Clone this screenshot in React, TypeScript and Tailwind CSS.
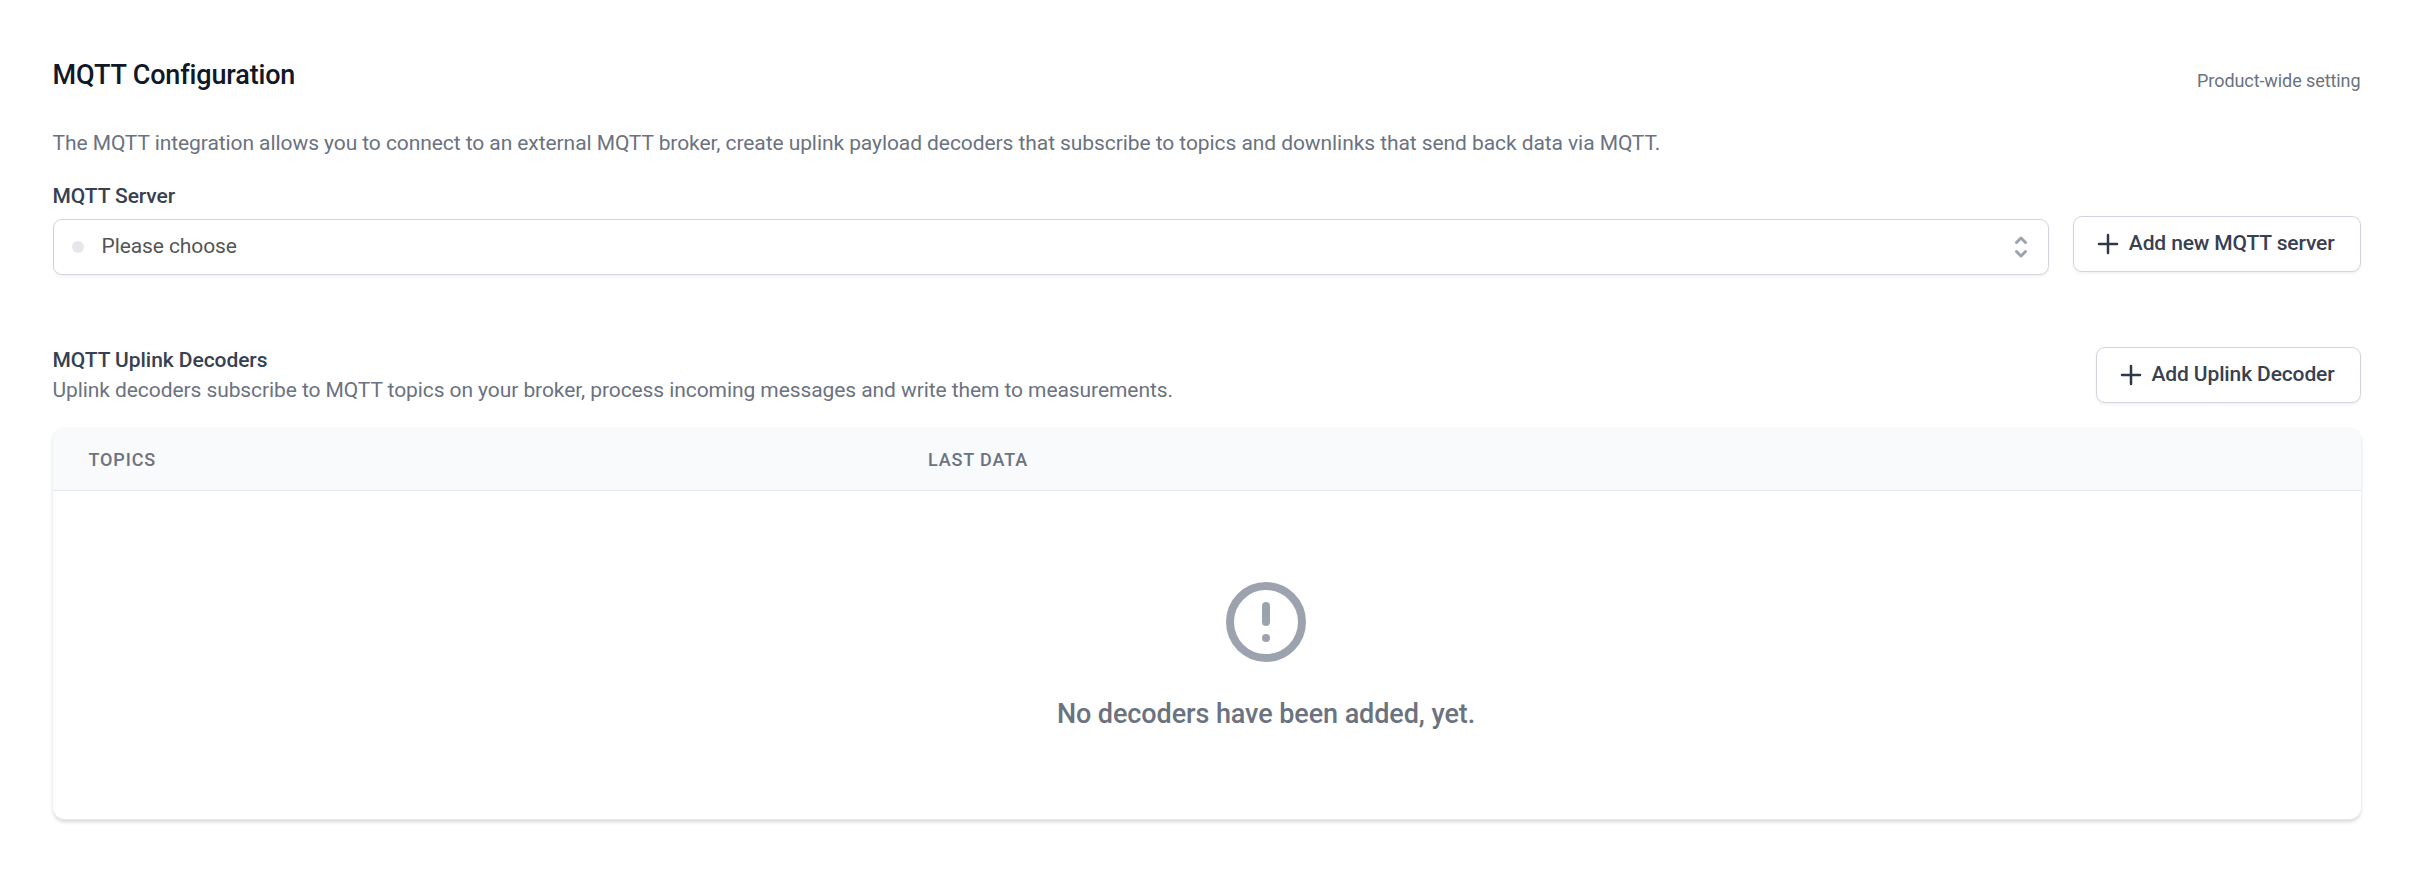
import React from "react";

function PlusIcon() {
  return (
    <svg className="-ml-1.5 mr-1.5 size-[30px] text-[#2d3949]" viewBox="0 0 24 24" fill="none" stroke="currentColor" strokeWidth="2">
      <path strokeLinecap="round" strokeLinejoin="round" d="M12 4.8v14.4m7.2-7.2H4.8" />
    </svg>
  );
}

function Button({ children }: { children: React.ReactNode }) {
  return (
    <button className="flex h-14 shrink-0 items-center rounded-[9px] border border-[#d1d5db] bg-white px-[25px] text-[21px] leading-[30px] font-medium tracking-[-0.13px] text-[#374151] shadow-[0_1.5px_3px_rgba(0,0,0,0.05)]">
      <PlusIcon />
      <span className="-mt-[3px]">{children}</span>
    </button>
  );
}

function ServerSelect() {
  return (
    <div className="flex h-14 items-center rounded-[9px] border border-[#d1d5db] bg-white pr-3 pl-[18px] shadow-[0_1.5px_3px_rgba(0,0,0,0.05)]">
      <span className="size-3 rounded-full bg-[#e5e7eb]" />
      <span className="-mt-[3px] ml-[18px] flex-1 text-[21px] leading-[30px] tracking-[-0.1px] text-[#555555]">Please choose</span>
      <svg className="size-[30px] text-[#9ca3af]" viewBox="0 0 20 20" fill="currentColor">
        <path
          fillRule="evenodd"
          clipRule="evenodd"
          d="M10 3a1 1 0 01.707.293l3 3a1 1 0 01-1.414 1.414L10 5.414 7.707 7.707a1 1 0 01-1.414-1.414l3-3A1 1 0 0110 3zm-3.707 9.293a1 1 0 011.414 0L10 14.586l2.293-2.293a1 1 0 011.414 1.414l-3 3a1 1 0 01-1.414 0l-3-3a1 1 0 010-1.414z"
        />
      </svg>
    </div>
  );
}

function DecoderTable() {
  return (
    <div className="mt-6 h-[391px] overflow-hidden rounded-xl border-b border-[#e5e7eb] bg-white shadow-[0_1.5px_4.5px_rgba(0,0,0,0.1),0_1.5px_3px_rgba(0,0,0,0.06)]">
      <div className="flex h-[62px] border-b border-[#e5e7eb] bg-[#f9fafb] pt-[19px] text-[18px] leading-6 font-medium tracking-[0.86px] text-[#6b7280] uppercase">
        <div className="w-[839.5px] pl-9">Topics</div>
        <div className="pl-9">Last data</div>
      </div>
      <div className="flex flex-col items-center pt-[83px] pl-[119px]">
        <svg className="size-24 text-[#9ca3af]" viewBox="0 0 24 24" fill="none" stroke="currentColor" strokeWidth="2">
          <path strokeLinecap="round" strokeLinejoin="round" d="M12 8v4m0 4h.01M21 12a9 9 0 11-18 0 9 9 0 0118 0z" />
        </svg>
        <p className="mt-[26px] text-[27px] leading-9 font-medium tracking-[-0.09px] text-[#6b7280]">No decoders have been added, yet.</p>
      </div>
    </div>
  );
}

export default function App() {
  return (
    <main className="h-[878px] bg-white pt-[57px] pr-[68.5px] pl-[52.5px] font-['Roboto',sans-serif]">
      <header className="flex items-end justify-between">
        <h1 className="text-[27px] leading-9 font-medium tracking-[-0.15px] text-[#111827]">MQTT Configuration</h1>
        <span className="text-[18px] leading-6 tracking-[-0.08px] text-[#6b7280]">Product-wide setting</span>
      </header>
      <p className="mt-[35px] text-[21px] leading-[30px] tracking-[-0.075px] text-[#6b7280]">
        The MQTT integration allows you to connect to an external MQTT broker, create uplink payload decoders that
        subscribe to topics and downlinks that send back data via MQTT.
      </p>
      <section className="mt-[23px] flex items-end gap-6">
        <div className="flex-1">
          <label className="block text-[21px] leading-[30px] font-medium tracking-[-0.08px] text-[#374151]">MQTT Server</label>
          <div className="mt-2">
            <ServerSelect />
          </div>
        </div>
        <div className="pb-[3px]">
          <Button>Add new MQTT server</Button>
        </div>
      </section>
      <section className="mt-[70px]">
        <div className="flex items-start justify-between">
          <div className="text-[21px] leading-[30px]">
            <h2 className="font-medium tracking-[-0.06px] text-[#374151]">MQTT Uplink Decoders</h2>
            <p className="tracking-[-0.08px] text-[#6b7280]">
              Uplink decoders subscribe to MQTT topics on your broker, process incoming messages and write them to
              measurements.
            </p>
          </div>
          <div className="pt-0.5">
            <Button>Add Uplink Decoder</Button>
          </div>
        </div>
        <DecoderTable />
      </section>
    </main>
  );
}
